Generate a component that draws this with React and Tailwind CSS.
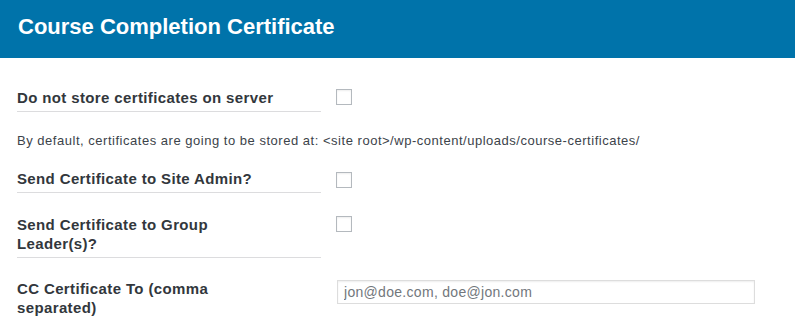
import React from "react";

const font = { fontFamily: '"Liberation Sans", Arial, sans-serif' };

function Checkbox() {
  return (
    <div className="w-4 h-4 border border-[#b4b9be] bg-white shadow-[inset_0_1px_2px_rgba(0,0,0,0.07)] shrink-0" />
  );
}

function Row({ children, control, className = "" }) {
  return (
    <div className={`flex items-start ${className}`}>
      <div className="w-[304px] border-b border-[#dcdcde] pb-[4px] text-[15px] leading-[19px] font-bold tracking-[0.37px] text-[#32373c]">
        {children}
      </div>
      <div className="ml-[15px] pt-[1px]">{control}</div>
    </div>
  );
}

export default function App() {
  return (
    <div className="w-[795px] h-[319px] bg-white overflow-hidden" style={font}>
      <div className="h-[58px] bg-[#0073aa] flex items-center px-[18px]">
        <h1 className="text-[22px] font-bold text-white leading-none pb-[4px]">
          Course Completion Certificate
        </h1>
      </div>
      <div className="pl-[17px]">
        <Row className="mt-[30px]" control={<Checkbox />}>
          Do not store certificates on server
        </Row>
        <p className="mt-[20px] text-[13px] leading-[18px] tracking-[0.52px] text-[#3c434a]">
          By default, certificates are going to be stored at: &lt;site root&gt;/wp-content/uploads/course-certificates/
        </p>
        <Row className="mt-[19px]" control={<div className="pt-[2px]"><Checkbox /></div>}>
          Send Certificate to Site Admin?
        </Row>
        <Row className="mt-[22px]" control={<Checkbox />}>
          Send Certificate to Group
          <br />
          Leader(s)?
        </Row>
        <div className="flex items-start mt-[21px]">
          <div className="w-[304px] text-[15px] leading-[19px] font-bold tracking-[0.37px] text-[#32373c]">
            CC Certificate To (comma
            <br />
            separated)
          </div>
          <div className="ml-[16px] pt-[1px]">
            <input
              type="text"
              placeholder="jon@doe.com, doe@jon.com"
              className="w-[418px] h-[24px] border border-[#dddddd] px-[6px] text-[14px] tracking-[0.3px] text-[#32373c] placeholder:text-[#72777c] shadow-[inset_0_1px_2px_rgba(0,0,0,0.07)] outline-none"
              style={font}
            />
          </div>
        </div>
      </div>
    </div>
  );
}
